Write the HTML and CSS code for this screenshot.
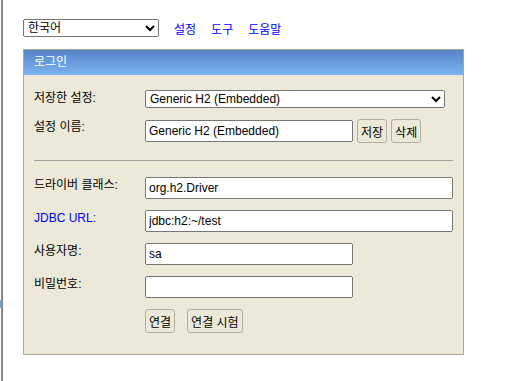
FILE: index.html
```html
<!DOCTYPE html>
<html lang="ko">
<head>
    <meta charset="UTF-8">
    <meta name="viewport" content="width=device-width, initial-scale=1.0">
    <title>H2 Console</title>
    <link rel="stylesheet" href="styles.css">
</head>
<body>
    <div class="edge"><span class="edge-mark"></span></div>
    <div class="edge-line"></div>
    <div class="page">
        <div class="topbar">
            <select class="lang">
                <option>한국어</option>
            </select>
            <a href="#">설정</a>
            <a href="#">도구</a>
            <a href="#">도움말</a>
        </div>

        <div class="login">
            <div class="login-head">로그인</div>
            <div class="login-body">
                <label for="setting">저장한 설정:</label>
                <select id="setting" class="setting">
                    <option>Generic H2 (Embedded)</option>
                </select>

                <label for="name">설정 이름:</label>
                <div class="field-row">
                    <input type="text" id="name" class="short" value="Generic H2 (Embedded)">
                    <button class="small">저장</button>
                    <button class="small">삭제</button>
                </div>

                <hr>

                <label for="driver">드라이버 클래스:</label>
                <input type="text" id="driver" class="wide" value="org.h2.Driver">

                <label for="url" class="link-label">JDBC URL:</label>
                <input type="text" id="url" class="wide" value="jdbc:h2:~/test">

                <label for="user">사용자명:</label>
                <input type="text" id="user" class="short" value="sa">

                <label for="password">비밀번호:</label>
                <input type="password" id="password" class="short" value="">

                <div class="actions">
                    <button>연결</button>
                    <button>연결 시험</button>
                </div>
            </div>
        </div>
    </div>
</body>
</html>
```

FILE: styles.css
```css
body {
    margin: 0;
    display: flex;
    min-height: 100vh;
    background-color: #fff;
    font-family: "Liberation Sans", "Noto Sans CJK KR", sans-serif;
    font-size: 12px;
    color: #000;
}
.edge {
    width: 1px;
}
.edge-mark {
    display: block;
    margin-top: 300px;
    height: 8px;
    background-color: #7aa6dc;
}
.edge-line {
    width: 2px;
    background-color: #888;
}
.page {
    padding: 19px 0 0 20px;
}
.topbar {
    display: flex;
    align-items: center;
    gap: 15px;
}
.topbar a {
    color: #0000ff;
    text-decoration: none;
}
select, input, button {
    font-family: "Liberation Sans", "Noto Sans CJK KR", sans-serif;
    font-size: 12px;
    color: #000;
}
select {
    height: 18px;
    box-sizing: border-box;
    margin: 0;
}
.lang {
    width: 136px;
}
.login {
    margin-top: 12px;
    width: 441px;
    box-sizing: border-box;
    border: 1px solid #aca899;
    background-color: #ece9d8;
}
.login-head {
    height: 25px;
    line-height: 25px;
    padding-left: 10px;
    color: #fff;
    background: linear-gradient(#5584c9, #7db4f1);
}
.login-body {
    display: grid;
    grid-template-columns: 111px 1fr;
    row-gap: 11px;
    align-items: start;
    padding: 15px 10px 21px 10px;
}
label {
    line-height: 17px;
}
.link-label {
    color: #0000ff;
}
.setting {
    width: 300px;
}
input[type="text"], input[type="password"] {
    height: 22px;
    box-sizing: border-box;
    margin: 0;
}
.wide {
    width: 308px;
}
.short {
    width: 208px;
}
.field-row {
    display: flex;
    align-items: center;
    gap: 4px;
    height: 24px;
}
button {
    height: 24px;
    margin: 0;
    padding: 0 3px;
    background-color: #ece9d8;
    border: 1px solid #b2ae9f;
    border-radius: 3px;
}
hr {
    grid-column: 1 / -1;
    margin: 6px 0 5px 0;
    border: 0;
    border-top: 1px solid #a0a0a0;
}
.actions {
    grid-column: 2;
    display: flex;
    gap: 12px;
}
```
